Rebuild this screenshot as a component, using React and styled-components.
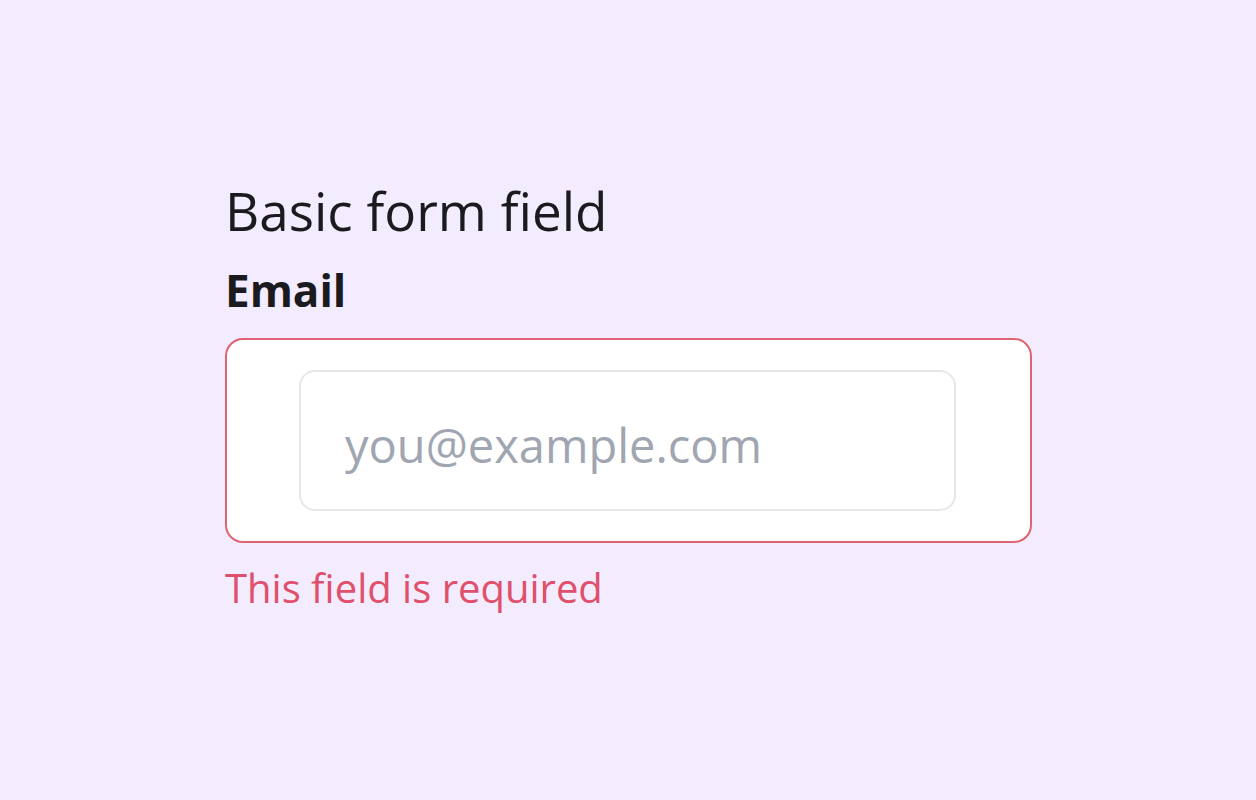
import React from "react";
import styled, { createGlobalStyle } from "styled-components";

const GlobalStyle = createGlobalStyle`
  html, body {
    margin: 0;
    padding: 0;
    background: #f2ecfe;
  }
  body {
    font-family: "Open Sans", "Noto Sans", sans-serif;
    color: #1a1a1a;
  }
`;

const Page = styled.div`
  min-height: 800px;
  padding: 177px 0 0 225px;
  box-sizing: border-box;
`;

const Title = styled.h2`
  margin: 0;
  font-size: 53px;
  font-weight: 400;
  line-height: 68px;
  color: #1b1b1f;
`;

const Label = styled.label`
  display: block;
  margin-top: 17px;
  font-size: 44px;
  font-weight: 700;
  line-height: 56px;
  color: #1b1b1f;
`;

const Field = styled.div`
  width: 807px;
  height: 205px;
  margin-top: 20px;
  box-sizing: border-box;
  border: 2px solid ${({ invalid }) => (invalid ? "#e06371" : "#d9d9d9")};
  border-radius: 18px;
  background: #ffffff;
  display: flex;
  align-items: center;
  padding: 0 74px 0 72px;
`;

const Input = styled.input`
  flex: 1;
  min-width: 0;
  height: 141px;
  box-sizing: border-box;
  border: 2px solid #e7e7e7;
  border-radius: 16px;
  background: #ffffff;
  padding: 8px 44px 0;
  font-family: "Open Sans", "Noto Sans", sans-serif;
  font-size: 47px;
  color: #1b1b1f;
  outline: none;
  &::placeholder {
    color: #a0a6b1;
  }
`;

const Error = styled.div`
  margin-top: 20px;
  font-size: 40px;
  line-height: 50px;
  color: #e0506c;
`;

export default function App() {
  return (
    <>
      <GlobalStyle />
      <Page>
        <Title>Basic form field</Title>
        <Label htmlFor="email">Email</Label>
        <Field invalid>
          <Input id="email" type="email" placeholder="you@example.com" />
        </Field>
        <Error>This field is required</Error>
      </Page>
    </>
  );
}
